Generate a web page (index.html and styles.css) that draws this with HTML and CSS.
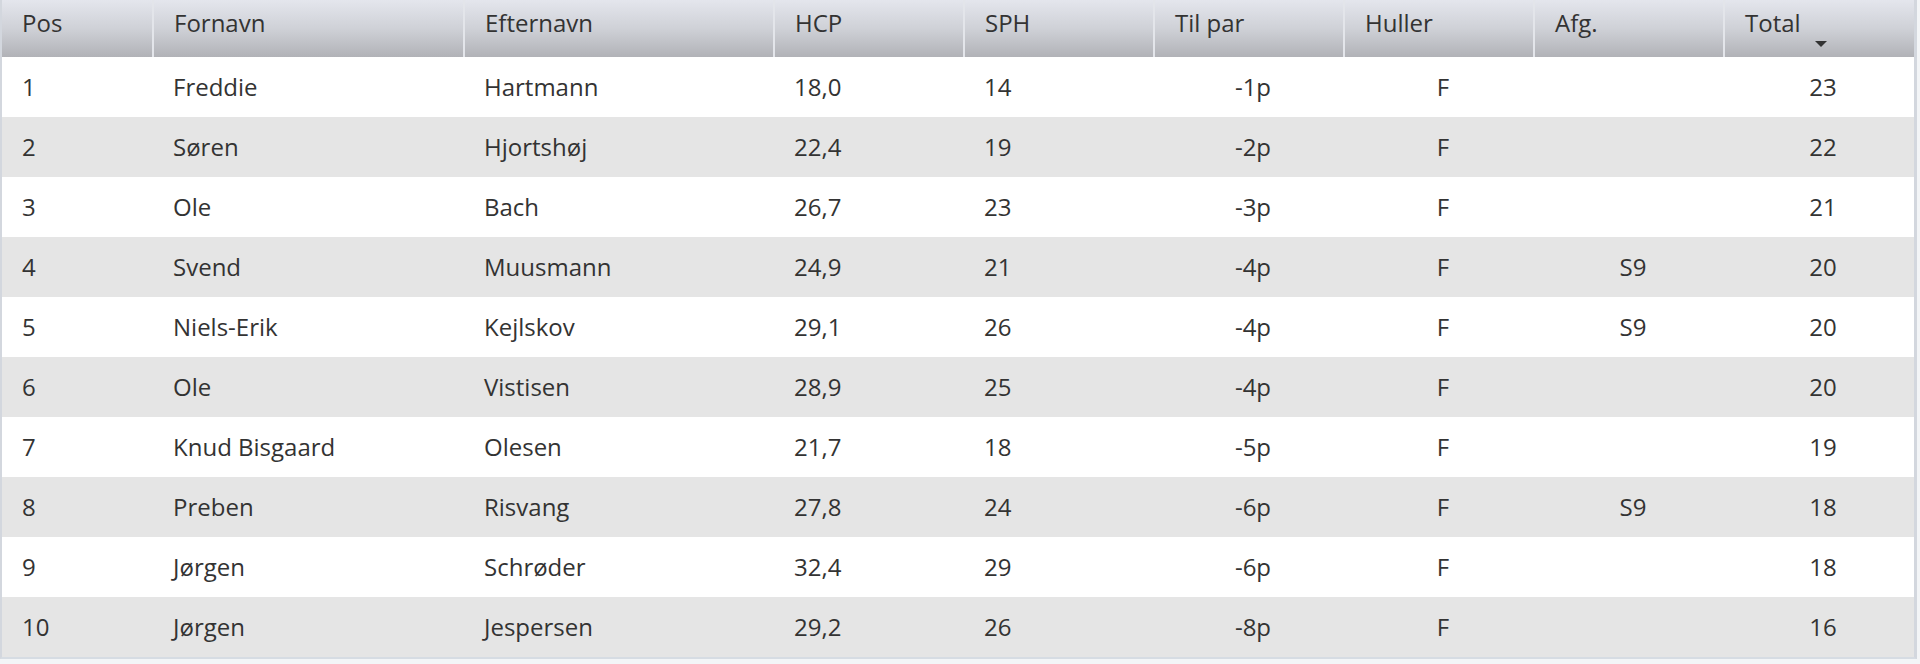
FILE: index.html
```html
<!DOCTYPE html>
<html lang="da">
<head>
<meta charset="utf-8">
<title>Resultater</title>
<link rel="stylesheet" href="styles.css">
</head>
<body>
<div class="grid">
<table class="results">
<colgroup>
<col class="c-pos"><col class="c-name"><col class="c-name2"><col class="c-num"><col class="c-num"><col class="c-num"><col class="c-num"><col class="c-num"><col class="c-total">
</colgroup>
<thead>
<tr>
<th>Pos</th><th>Fornavn</th><th>Efternavn</th><th>HCP</th><th>SPH</th><th>Til par</th><th>Huller</th><th>Afg.</th><th class="sorted">Total<span class="arrow"></span></th>
</tr>
</thead>
<tbody>
<tr><td>1</td><td>Freddie</td><td>Hartmann</td><td>18,0</td><td>14</td><td class="ctr">-1p</td><td class="ctr">F</td><td class="ctr"></td><td class="ctr">23</td></tr>
<tr><td>2</td><td>Søren</td><td>Hjortshøj</td><td>22,4</td><td>19</td><td class="ctr">-2p</td><td class="ctr">F</td><td class="ctr"></td><td class="ctr">22</td></tr>
<tr><td>3</td><td>Ole</td><td>Bach</td><td>26,7</td><td>23</td><td class="ctr">-3p</td><td class="ctr">F</td><td class="ctr"></td><td class="ctr">21</td></tr>
<tr><td>4</td><td>Svend</td><td>Muusmann</td><td>24,9</td><td>21</td><td class="ctr">-4p</td><td class="ctr">F</td><td class="ctr">S9</td><td class="ctr">20</td></tr>
<tr><td>5</td><td>Niels-Erik</td><td>Kejlskov</td><td>29,1</td><td>26</td><td class="ctr">-4p</td><td class="ctr">F</td><td class="ctr">S9</td><td class="ctr">20</td></tr>
<tr><td>6</td><td>Ole</td><td>Vistisen</td><td>28,9</td><td>25</td><td class="ctr">-4p</td><td class="ctr">F</td><td class="ctr"></td><td class="ctr">20</td></tr>
<tr><td>7</td><td>Knud Bisgaard</td><td>Olesen</td><td>21,7</td><td>18</td><td class="ctr">-5p</td><td class="ctr">F</td><td class="ctr"></td><td class="ctr">19</td></tr>
<tr><td>8</td><td>Preben</td><td>Risvang</td><td>27,8</td><td>24</td><td class="ctr">-6p</td><td class="ctr">F</td><td class="ctr">S9</td><td class="ctr">18</td></tr>
<tr><td>9</td><td>Jørgen</td><td>Schrøder</td><td>32,4</td><td>29</td><td class="ctr">-6p</td><td class="ctr">F</td><td class="ctr"></td><td class="ctr">18</td></tr>
<tr><td>10</td><td>Jørgen</td><td>Jespersen</td><td>29,2</td><td>26</td><td class="ctr">-8p</td><td class="ctr">F</td><td class="ctr"></td><td class="ctr">16</td></tr>
</tbody>
</table>
</div>
</body>
</html>
```
FILE: styles.css
```css
html, body {
  margin: 0;
  padding: 0;
  background: #f3f5f7;
}
body {
  font-family: "Open Sans", "DejaVu Sans", sans-serif;
  font-size: 24px;
  color: #333333;
}
.grid {
  width: 1912px;
  border-left: 2px solid #d3d7de;
  border-right: 3px solid #d3d7de;
  border-bottom: 2px solid #d6dce3;
  background: #ffffff;
}
.results {
  width: 1912px;
  border-collapse: collapse;
  table-layout: fixed;
}
.c-pos { width: 151px; }
.c-name { width: 311px; }
.c-name2 { width: 310px; }
.c-num { width: 190px; }
.c-total { width: 190px; }
.results thead th {
  height: 57px;
  box-sizing: border-box;
  padding: 11px 0 0 20px;
  vertical-align: top;
  text-align: left;
  font-weight: 400;
  line-height: 24px;
  color: #333333;
  background: linear-gradient(to bottom, #e4e6ed 0%, #cfd1d7 50%, #b1b2b7 100%);
  border-left: 2px solid #e3e5ea;
  position: relative;
  white-space: nowrap;
}
.results thead th:first-child {
  border-left: none;
}
.arrow {
  position: absolute;
  left: 90px;
  top: 41px;
  width: 0;
  height: 0;
  border-left: 6px solid transparent;
  border-right: 6px solid transparent;
  border-top: 6px solid #333333;
}
.results tbody td {
  height: 60px;
  box-sizing: border-box;
  padding: 0 0 0 20px;
  vertical-align: middle;
  line-height: 24px;
  white-space: nowrap;
}
.results tbody tr:nth-child(even) td {
  background: #e5e5e5;
}
.results tbody td.ctr {
  text-align: center;
  padding: 0 0 0 8px;
}
```
